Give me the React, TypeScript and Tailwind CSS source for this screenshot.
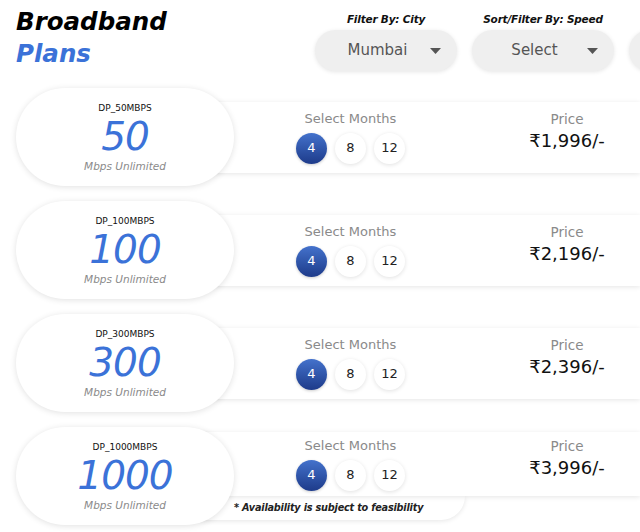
import React from "react";

const font = { fontFamily: '"DejaVu Sans", "Liberation Sans", sans-serif' };

function Caret() {
  return (
    <svg width="11" height="6" viewBox="0 0 11 6">
      <path d="M0 0 L11 0 L5.5 6 Z" fill="#555" />
    </svg>
  );
}

function Dropdown({ label, value }: { label?: string; value?: string }) {
  return (
    <div className="flex flex-col items-center w-[142px] shrink-0">
      <div className="h-[13px] text-[10.5px] leading-[13px] italic font-semibold text-[#111] whitespace-nowrap tracking-[-0.2px]">
        {label}
      </div>
      <div className="mt-[4px] w-[142px] h-[41px] rounded-full bg-[#efefef] shadow-[0_1px_4px_rgba(0,0,0,0.1)] flex items-center pl-[20px] pr-[16px]">
        <span className="flex-1 text-center text-[15px] text-[#555]">{value}</span>
        <span className="ml-[10px] flex items-center">
          <Caret />
        </span>
      </div>
    </div>
  );
}

function Months() {
  return (
    <div className="flex flex-col items-center w-[109px]">
      <div className="text-[13px] leading-[16px] text-[#8a8a8a] whitespace-nowrap">Select Months</div>
      <div className="flex gap-[8px] mt-[6px]">
        <div className="w-[31px] h-[31px] rounded-full bg-gradient-to-b from-[#4472cc] to-[#1e3b8a] text-white text-[13px] flex items-center justify-center shadow-[0_1px_3px_rgba(0,0,0,0.2)]">
          4
        </div>
        <div className="w-[31px] h-[31px] rounded-full bg-white text-[#222] text-[13px] flex items-center justify-center shadow-[0_1px_4px_rgba(0,0,0,0.12)]">
          8
        </div>
        <div className="w-[31px] h-[31px] rounded-full bg-white text-[#222] text-[13px] flex items-center justify-center shadow-[0_1px_4px_rgba(0,0,0,0.12)]">
          12
        </div>
      </div>
    </div>
  );
}

function Price({ price }: { price: string }) {
  return (
    <div className="ml-[102px] mb-[10px] flex flex-col items-center w-[120px]">
      <div className="text-[13.5px] leading-[16px] text-[#8a8a8a]">Price</div>
      <div className="text-[18px] leading-[24px] text-[#111] mt-[2px] whitespace-nowrap">₹{price}/-</div>
    </div>
  );
}

function Pill({ code, speed }: { code: string; speed: string }) {
  return (
    <div className="relative z-10 w-[218px] h-[98px] shrink-0 rounded-full bg-white shadow-[0_1px_6px_rgba(0,0,0,0.12)] flex flex-col items-center pt-[15px]">
      <div className="text-[9px] leading-[11px] text-[#111]">{code}</div>
      <div className="text-[39px] leading-[44px] italic text-[#3b72d8] tracking-[-1px] mt-[1px]">{speed}</div>
      <div className="text-[10.5px] leading-[13px] italic text-[#8a8a8a] mt-[1px]">Mbps Unlimited</div>
    </div>
  );
}

function Row({ code, speed, price, last }: { code: string; speed: string; price: string; last?: boolean }) {
  return (
    <div className="flex items-center">
      <Pill code={code} speed={speed} />
      {last ? (
        <div className="flex-1 -ml-[34px] flex flex-col">
          <div className="relative z-[2] h-[64px] bg-white shadow-[0_1px_5px_rgba(0,0,0,0.1)] flex items-center pl-[96px]">
            <Months />
            <Price price={price} />
          </div>
          <div className="relative z-[1] w-[265px] h-[24px] bg-white rounded-br-[30px] shadow-[0_1px_5px_rgba(0,0,0,0.1)] pl-[34px] flex items-center">
            <span className="text-[9.7px] italic font-semibold text-[#222] whitespace-nowrap tracking-[-0.2px]">
              * Availability is subject to feasibility
            </span>
          </div>
        </div>
      ) : (
        <div className="flex-1 -ml-[34px] h-[71px] bg-white shadow-[0_1px_5px_rgba(0,0,0,0.1)] flex items-center pl-[96px]">
          <Months />
          <Price price={price} />
        </div>
      )}
    </div>
  );
}

export default function App() {
  return (
    <div className="w-[640px] h-[532px] overflow-hidden bg-white" style={font}>
      <div className="flex pl-[16px] h-[88px]">
        <div className="w-[299px] shrink-0 pt-[6px]">
          <div className="text-[24.5px] leading-[32px] italic font-bold text-black">Broadband</div>
          <div className="text-[24.5px] leading-[32px] italic font-bold text-[#3b72d8]">Plans</div>
        </div>
        <div className="flex gap-[15px] pt-[13px]">
          <Dropdown label="Filter By: City" value="Mumbai" />
          <Dropdown label="Sort/Filter By: Speed" value="Select" />
          <Dropdown />
        </div>
      </div>
      <div className="flex flex-col gap-[15px] pl-[16px]">
        <Row code="DP_50MBPS" speed="50" price="1,996" />
        <Row code="DP_100MBPS" speed="100" price="2,196" />
        <Row code="DP_300MBPS" speed="300" price="2,396" />
        <Row code="DP_1000MBPS" speed="1000" price="3,996" last />
      </div>
    </div>
  );
}
